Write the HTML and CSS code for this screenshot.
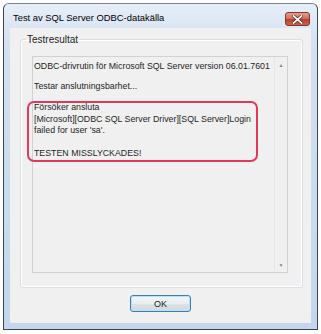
FILE: index.html
```html
<!DOCTYPE html>
<html lang="sv">
<head>
    <meta charset="UTF-8">
    <title>Test av SQL Server ODBC-datakälla</title>
    <link rel="stylesheet" href="styles.css">
</head>
<body>

<div class="window">
    <div class="titlebar">
        <span class="title">Test av SQL Server ODBC-datakälla</span>
        <button class="close-btn" aria-label="Stäng">
            <svg width="11" height="9" viewBox="0 0 11 9">
                <path d="M1.5 1 L9.5 8 M9.5 1 L1.5 8" stroke="#5a1a12" stroke-width="3.2" stroke-linecap="square"/>
                <path d="M1.5 1 L9.5 8 M9.5 1 L1.5 8" stroke="#ffffff" stroke-width="1.8" stroke-linecap="square"/>
            </svg>
        </button>
    </div>

    <div class="client">
        <fieldset class="groupbox">
            <legend>Testresultat</legend>
            <div class="result">
                <div class="result-text">
                    <p class="line-first">ODBC-drivrutin för Microsoft SQL Server version 06.01.7601</p>
                    <p class="line-second">Testar anslutningsbarhet...</p>
                    <p class="line-error">Försöker ansluta<br>[Microsoft][ODBC SQL Server Driver][SQL Server]Login<br>failed for user 'sa'.<br><br>TESTEN MISSLYCKADES!</p>
                </div>
                <div class="scrollbar">
                    <span class="arrow">&#9650;</span>
                    <span class="arrow">&#9660;</span>
                </div>
                <div class="highlight"></div>
            </div>
        </fieldset>

        <div class="buttons">
            <button class="ok-btn">OK</button>
        </div>
    </div>
</div>

</body>
</html>
```

FILE: styles.css
```css
body {
    margin: 0;
    background: #ffffff;
    font-family: 'Liberation Sans', Arial, sans-serif;
    color: #1e1e1e;
}

.window {
    margin: 3px 0 0 3px;
    width: 315px;
    height: 327px;
    box-sizing: border-box;
    border: 1px solid #3b4652;
    border-top-color: #7a8590;
    border-radius: 6px 6px 0 0;
    background: linear-gradient(#e6eef8, #d3e1f1 40px, #c3d6ed);
    padding: 0 6px 6px 6px;
    display: flex;
    flex-direction: column;
}

.titlebar {
    height: 24px;
    display: flex;
    align-items: center;
    position: relative;
}

.title {
    margin-left: 3px;
    margin-top: 3px;
    font-size: 9.4px;
    color: #000;
}

.close-btn {
    position: absolute;
    right: 1px;
    top: 8px;
    width: 25px;
    height: 14px;
    padding: 0;
    border: 1px solid #8a3326;
    border-radius: 3px;
    background: linear-gradient(#e3a08f, #cf6a55 50%, #b8402c 51%, #c9614a);
    display: flex;
    align-items: center;
    justify-content: center;
}

.client {
    height: 295px;
    background: #f0f0f0;
    display: flex;
    flex-direction: column;
}

.groupbox {
    margin: 6px 0 0 10px;
    width: 283px;
    height: 254px;
    box-sizing: border-box;
    border: 1px solid #d5dfe5;
    box-shadow: inset 0 0 0 1px #ffffff;
    border-radius: 3px;
    padding: 0 14px 14px 11px;
}

.groupbox legend {
    font-size: 10px;
    padding: 0 1px;
    margin-left: -6px;
    line-height: 11px;
    color: #1e1e1e;
}

.result {
    position: relative;
    margin-top: 11px;
    height: 217px;
    box-sizing: border-box;
    border: 1px solid #d2d2d2;
    background: #f0f0f0;
    display: flex;
}

.result-text {
    flex: 1;
    padding: 4px 0 0 1px;
    font-size: 8.8px;
    line-height: 11.5px;
    white-space: nowrap;
}

.result-text p {
    margin: 0;
}

.line-second {
    margin-top: 8px !important;
}

.line-error {
    margin-top: 10px !important;
}

.scrollbar {
    width: 12px;
    border-left: 1px solid #e6e6e6;
    display: flex;
    flex-direction: column;
    justify-content: space-between;
    align-items: center;
    padding: 5px 0 4px 0;
}

.arrow {
    font-size: 5px;
    line-height: 6px;
    color: #8a8a8a;
}

.highlight {
    position: absolute;
    left: -6px;
    top: 44px;
    width: 231px;
    height: 61px;
    box-sizing: border-box;
    border: 2px solid #e0395c;
    border-radius: 7px;
}

.buttons {
    margin-top: 7px;
    display: flex;
    justify-content: center;
}

.ok-btn {
    width: 61px;
    height: 17px;
    padding: 0;
    font-family: 'Liberation Sans', Arial, sans-serif;
    font-size: 9px;
    color: #1e1e1e;
    border: 1px solid #3c7fb1;
    border-radius: 3px;
    background: linear-gradient(#f4f6f8, #eaedf0 50%, #dde2e7 51%, #d3d9df);
    box-shadow: inset 0 0 0 1px #b5e2f7;
}
```
